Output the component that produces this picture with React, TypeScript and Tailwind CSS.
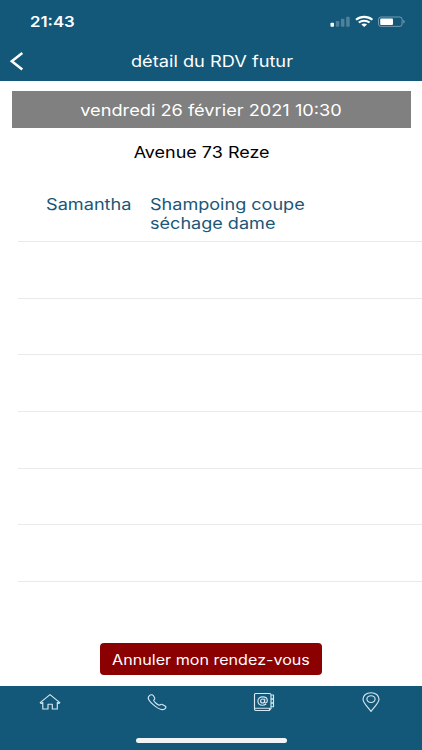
import type { ReactNode } from 'react';

const emptyRows = [1, 2, 3, 4, 5, 6];

function StatusBar() {
  return (
    <div className="flex h-[42px] items-center justify-between pl-[30px] pr-4 text-white">
      <span className="inline-block origin-left scale-x-[1.12] text-[15px] font-semibold leading-none">21:43</span>
      <svg width="76" height="14" viewBox="0 0 76 14" fill="currentColor">
        <rect x="0.5" y="8.7" width="3.5" height="4" rx="0.8" />
        <rect x="5.8" y="7" width="3.5" height="5.7" rx="0.8" opacity="0.25" />
        <rect x="10.9" y="4.7" width="3.5" height="8" rx="0.8" opacity="0.25" />
        <rect x="16.2" y="2.8" width="3.5" height="9.9" rx="0.8" opacity="0.25" />
        <path d="M26 5.8C30.6 1.9 37.8 1.9 42.4 5.8" fill="none" stroke="currentColor" strokeWidth="2.1" />
        <path d="M28.8 8.5C31.8 6 36.6 6 39.6 8.5" fill="none" stroke="currentColor" strokeWidth="2" />
        <path d="M31.4 10.6C33 9.2 35.4 9.2 37 10.6L34.2 12.9Z" />
        <rect x="48.5" y="3" width="23.6" height="9.4" rx="2.4" fill="none" stroke="currentColor" opacity="0.4" />
        <rect x="50.2" y="4.6" width="12.8" height="6.3" rx="1" />
        <path d="M73.3 5.8C75.2 6.5 75.2 8.9 73.3 9.6Z" opacity="0.45" />
      </svg>
    </div>
  );
}

function TabButton({ label, children }: { label: string; children: ReactNode }) {
  return (
    <button aria-label={label} className="flex justify-center text-[#d5e8f3]">
      <svg width="24" height="24" viewBox="0 0 24 24" fill="none" stroke="currentColor" strokeWidth="1.15" strokeLinejoin="round" strokeLinecap="round">
        {children}
      </svg>
    </button>
  );
}

export default function App() {
  return (
    <div className="flex h-[750px] w-[422px] flex-col overflow-hidden bg-white font-['Inter',sans-serif]">
      <header className="h-[81px] shrink-0 bg-[#135878]">
        <StatusBar />
        <div className="grid h-[38px] grid-cols-[40px_1fr_38px] items-center text-white">
          <svg className="ml-[9px]" width="16" height="20" viewBox="0 0 16 20" fill="none" stroke="currentColor" strokeWidth="2.5">
            <path d="M13.3 2L2.8 10.3L13.3 18.6" />
          </svg>
          <h1 className="pt-0.5 text-center text-[15.5px] leading-none">
            <span className="inline-block scale-x-[1.175] whitespace-nowrap">détail du RDV futur</span>
          </h1>
        </div>
      </header>

      <main className="flex grow flex-col">
        <div className="ml-3 mr-[11.5px] mt-[10px] flex h-[37px] shrink-0 items-center justify-center bg-[#808080] text-[16px] text-white">
          <span className="inline-block scale-x-[1.137] whitespace-nowrap">vendredi 26 février 2021 10:30</span>
        </div>
        <p className="mr-[19px] mt-[13px] text-center text-[15.5px] leading-6 text-black">
          <span className="inline-block scale-x-[1.16] whitespace-nowrap">Avenue 73 Reze</span>
        </p>

        <ul className="ml-[18px] mt-5">
          <li className="flex h-[57px] border-b border-[#e9e9e9] pl-[27.5px] pt-[11px] text-[15.5px] leading-[18.5px] text-[#1a5778]">
            <span className="w-[104px]">
              <span className="inline-block origin-left scale-x-[1.17]">Samantha</span>
            </span>
            <span className="inline-block origin-left scale-x-[1.165] whitespace-nowrap">
              Shampoing coupe
              <br />
              séchage dame
            </span>
          </li>
          {emptyRows.map((row) => (
            <li key={row} className="h-[56.67px] border-b border-[#e9e9e9]" />
          ))}
        </ul>

        <button className="mx-auto mb-[11px] mt-auto h-8 w-[222px] rounded-[4px] bg-[#8b0000] text-[14px] text-white">
          <span className="inline-block scale-x-[1.15] whitespace-nowrap">Annuler mon rendez-vous</span>
        </button>
      </main>

      <footer className="flex h-16 shrink-0 flex-col bg-[#135878]">
        <nav className="-ml-1 grid w-[428px] grid-cols-4 pt-1">
          <TabButton label="Accueil">
            <path d="M2.2 12.6L12 4.6L21.8 12.6L20.8 13.5L19.3 12.6V19H14.3V14.2H10V19H4.8V12.6L3.2 13.5Z" />
          </TabButton>
          <TabButton label="Téléphone">
            <path d="M4.2 5.8C5.6 4.5 7.4 4.3 8.4 5.8L9.6 7.7C10.2 8.7 9.5 9.4 8.8 10.2C8.4 10.7 9.5 12 11 13.3C12.6 14.7 14 15.4 14.7 15C15.6 14.4 16.4 13.8 17.3 14.4L20.1 16C21.4 16.8 21.2 18 19.7 18.9C17 20.6 12.5 18.4 8.5 14.9C4.6 11.5 1.7 8.1 4.2 5.8Z" />
          </TabButton>
          <TabButton label="Contact">
            <path d="M3.5 3.5H17.5Q19 3.5 19 5V18.5L17 20.5H4Q2.5 20.5 2.5 19V4.5Q2.5 3.5 3.5 3.5ZM2.5 18.2H17.5V20.5M19 5H21.5V8.7H19M19 9.2H21.5V12.7H19M19 13.2H21.5V16.7H19" />
            <ellipse cx="10.6" cy="11" rx="2" ry="2" />
            <path d="M12.8 9.2L12.5 12C12.7 13.5 15.3 13 15.3 10.7C15.3 8.4 13.3 6.8 10.7 6.8C8 6.8 5.9 8.6 5.9 11C5.9 13.7 8.1 15.2 10.6 15.2C11.9 15.2 13 14.9 13.8 14.3" />
          </TabButton>
          <TabButton label="Adresse">
            <path d="M12 21.3C9.3 17.4 4 13 4 9.2C4 5.4 7.4 2.7 12 2.7S20 5.4 20 9.2C20 13 14.7 17.4 12 21.3Z" />
            <ellipse cx="12" cy="9.1" rx="4.1" ry="3.4" />
          </TabButton>
        </nav>
        <div className="mx-auto mb-[7.5px] mt-auto h-[5px] w-[151px] rounded-full bg-[#f1f4f6]" />
      </footer>
    </div>
  );
}
